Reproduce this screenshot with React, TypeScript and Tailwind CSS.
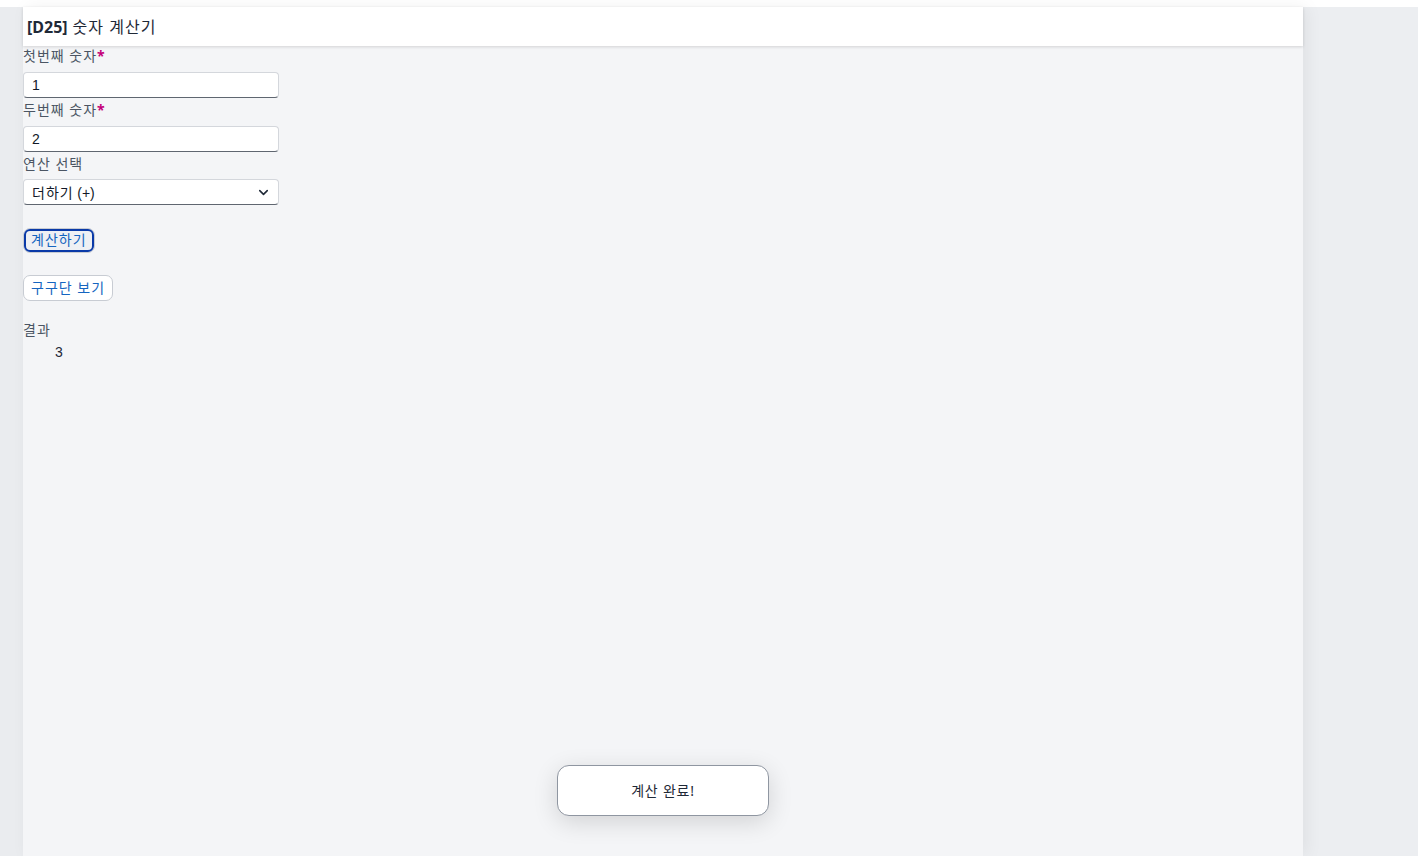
import { ChevronDown } from "lucide-react";

const font = { fontFamily: '"Noto Sans", "Noto Sans CJK KR", sans-serif' };

function Label({ text, required }: { text: string; required?: boolean }) {
  return (
    <div className="text-sm leading-5 tracking-[1px] text-[#4b5563]">
      {text}
      {required && <span className="font-bold text-[#c4007a]">*</span>}
    </div>
  );
}

function Field({ value }: { value: string }) {
  return (
    <div className="flex h-[26px] w-[256px] items-center rounded-[4px] border border-[#d4d7dc] border-b-[#5f6670] bg-white px-[8px] text-sm text-[#111827]">
      <span style={{ fontFamily: '"Liberation Sans", "Noto Sans CJK KR", sans-serif' }}>{value}</span>
    </div>
  );
}

export default function App() {
  return (
    <div className="min-h-[856px] bg-white pt-[7px]" style={font}>
      <div className="relative flex h-[849px] bg-[#eceef1]">
        <div className="w-[23px] shrink-0 bg-[#eaecef]" />
        <div className="relative z-10 flex w-[1280px] shrink-0 flex-col bg-[#f4f5f7] shadow-[4px_0_16px_rgba(0,0,0,0.06)]">
          <div className="flex h-[39px] items-center bg-white px-[4px] text-base text-[#1f2937] shadow-[0_1px_3px_rgba(0,0,0,0.14)]">
            <span className="font-bold">[D25]</span>
            <span className="ml-[5px] tracking-[1px]">숫자 계산기</span>
          </div>

          <div className="flex flex-col">
            <div className="mb-[6px]">
              <Label text="첫번째 숫자" required />
            </div>
            <Field value="1" />
            <div className="mt-[2px] mb-[6px]">
              <Label text="두번째 숫자" required />
            </div>
            <Field value="2" />
            <div className="mt-[2px] mb-[5px]">
              <Label text="연산 선택" />
            </div>
            <div className="flex h-[26px] w-[256px] items-center justify-between rounded-[4px] border border-[#d4d7dc] border-b-[#5f6670] bg-white pr-[7px] pl-[8px] text-sm text-[#111827]">
              <span className="pt-[1px]">
                <span className="tracking-[1px]">더하기</span>{" "}
                <span style={{ fontFamily: '"Liberation Sans", sans-serif' }}>(+)</span>
              </span>
              <ChevronDown size={15} strokeWidth={2.5} className="text-[#1f2937]" />
            </div>

            <div className="mt-[22px]">
              <div className="inline-flex rounded-[7px] border border-[#c8ccd3]">
                <button className="flex h-[23px] items-center rounded-[6px] border-2 border-[#0a3aa8] bg-[#eef0f4] px-[5px] text-sm tracking-[1px] text-[#1565c0]">
                  계산하기
                </button>
              </div>
            </div>

            <div className="mt-[22px]">
              <button className="flex h-[26px] items-center rounded-[7px] border border-[#c8ccd3] bg-white px-[7px] text-sm tracking-[1px] text-[#1565c0]">
                구구단 보기
              </button>
            </div>

            <div className="mt-[19px] text-sm leading-5 tracking-[1px] text-[#4b5563]">결과</div>
            <div
              className="mt-[2px] pl-[32px] text-sm leading-5 text-[#1f2937]"
              style={{ fontFamily: '"Liberation Sans", sans-serif' }}
            >
              3
            </div>
          </div>

          <div className="absolute bottom-[40px] left-1/2 flex h-[51px] w-[212px] -translate-x-1/2 items-center justify-center rounded-[12px] border border-[#8f96a1] bg-white text-sm tracking-[0.8px] text-[#1f2937] shadow-[0_6px_24px_rgba(0,0,0,0.14)]">
            계산 완료!
          </div>
        </div>
        <div className="flex-1 bg-[#eceef1]" />
      </div>
    </div>
  );
}
